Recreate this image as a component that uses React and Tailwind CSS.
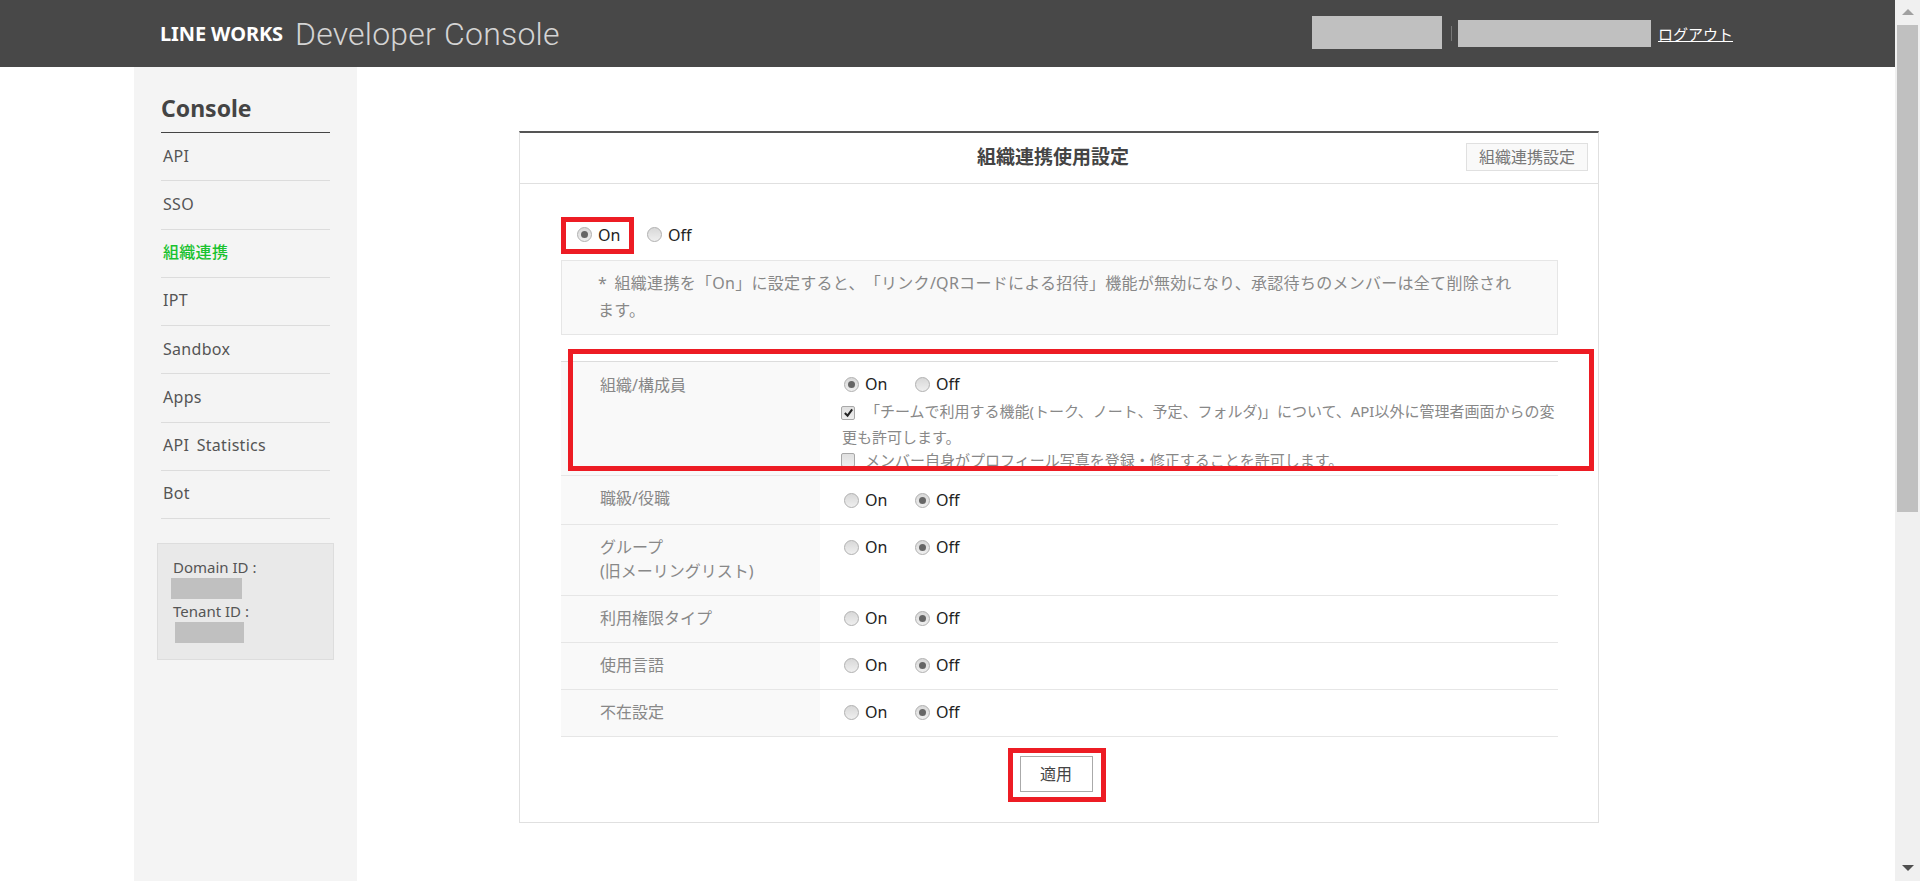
import React from "react";

const sans = "font-['Noto_Sans','Noto_Sans_CJK_JP',sans-serif] [text-spacing-trim:space-all]";

function Radio({ checked, label, className = "" }) {
  return (
    <label className={`flex items-center ${className}`}>
      <span className="flex h-[15px] w-[15px] items-center justify-center rounded-full border border-[#b0b0b0] bg-[linear-gradient(#d8d8d8,#efefef)]">
        {checked && <span className="h-[7px] w-[7px] rounded-full bg-[#666666]" />}
      </span>
      <span className="ml-[6px] text-[16px] leading-[20px] text-[#222222]">{label}</span>
    </label>
  );
}

function OnOff({ on }) {
  return (
    <div className="flex h-[20px] items-center">
      <Radio checked={on} label="On" className="w-[71px]" />
      <Radio checked={!on} label="Off" />
    </div>
  );
}

function Check({ checked }) {
  return (
    <span className="mr-[10px] -ml-px inline-flex h-[14px] w-[14px] translate-y-[1px] items-center justify-center rounded-[2px] border border-[#a8a8a8] bg-[linear-gradient(#e0e0e0,#eeeeee)]">
      {checked && (
        <svg viewBox="0 0 12 12" className="h-[11px] w-[11px]">
          <path d="M2 6.5 L5 9.5 L10 2.5" fill="none" stroke="#222222" strokeWidth="2.2" />
        </svg>
      )}
    </span>
  );
}

const navItems = ["API", "SSO", "組織連携", "IPT", "Sandbox", "Apps", "API Statistics", "Bot"];

const rows = [
  { label: "職級/役職", h: "h-[49px]", pt: "pt-[14px]" },
  { label: "グループ", sub: "(旧メーリングリスト)", h: "h-[71px]", pt: "pt-[12px]" },
  { label: "利用権限タイプ", h: "h-[47px]", pt: "pt-[12px]" },
  { label: "使用言語", h: "h-[47px]", pt: "pt-[12px]" },
  { label: "不在設定", h: "h-[47px]", pt: "pt-[12px]" },
];

export default function App() {
  return (
    <div className={`flex h-[881px] w-full overflow-hidden bg-white ${sans}`}>
      <div className="flex min-w-0 flex-1 flex-col">
        <header className="flex h-[67px] shrink-0 items-center justify-between bg-[#484848] pl-[160px] pr-[162px]">
          <div className="flex items-center">
            <span className="text-[20px] font-bold tracking-[-0.1px] text-white">LINE WORKS</span>
            <span className="ml-[12px] font-['Roboto',sans-serif] text-[32px] font-light leading-[40px] tracking-[0.2px] text-[#d4d4d4]">Developer Console</span>
          </div>
          <div className="flex items-center">
            <div className="mb-[2px] h-[33px] w-[130px] bg-[#c0c0c0]" />
            <div className="ml-[9px] h-[15px] w-px bg-[#777777]" />
            <div className="ml-[6px] h-[27px] w-[193px] bg-[#c0c0c0]" />
            <a className="ml-[7px] text-[15px] leading-[20px] text-white underline">ログアウト</a>
          </div>
        </header>

        <div className="flex min-h-0 flex-1">
          <aside className="ml-[134px] w-[223px] shrink-0 bg-[#f4f4f4] pl-[23px] pr-[23px]">
            <h2 className="ml-[4px] flex h-[65px] items-end pb-[9px] text-[23px] font-bold leading-[30px] text-[#444444]">Console</h2>
            <nav className="ml-[4px] w-[169px] border-t border-[#444444]">
              {navItems.map((item) => (
                <div
                  key={item}
                  className={`flex h-[48.25px] items-center border-b border-[#dcdcdc] pb-[2px] pl-[2px] text-[16px] tracking-[0.3px] [word-spacing:3px] ${item === "組織連携" ? "font-medium text-[#19c22f]" : "text-[#555555]"}`}
                >
                  {item}
                </div>
              ))}
            </nav>
            <div className="mt-[24px] h-[117px] w-[177px] border border-[#dddddd] bg-[#e9e9e9] pl-[15px] pt-[12px] text-[15px] leading-[22px] text-[#555555]">
              <div>Domain ID :</div>
              <div className="-ml-[2px] h-[21px] w-[71px] bg-[#c0c0c0]" />
              <div className="mt-[1px]">Tenant ID :</div>
              <div className="ml-[2px] h-[21px] w-[69px] bg-[#c0c0c0]" />
            </div>
          </aside>

          <main className="min-w-0 flex-1 pl-[162px] pt-[64px]">
            <section className="relative h-[692px] w-[1080px] border border-t-2 border-[#e0e0e0] border-t-[#555555]">
              <div className="flex h-[51px] items-center border-b border-[#e0e0e0] pb-[2px] pl-[457px] pr-[10px]">
                <h1 className="text-[19px] font-bold leading-[28px] text-[#444444]">組織連携使用設定</h1>
                <button className="ml-auto flex h-[28px] w-[122px] items-center justify-center border border-[#e0e0e0] bg-[#f9f9f9] text-[16px] text-[#777777]">
                  組織連携設定
                </button>
              </div>

              <div className="pl-[41px] pr-[40px]">
                <div className="flex h-[76px] items-center pl-[16px] pb-[6px] pt-[31px]">
                  <Radio checked label="On" className="w-[70px]" />
                  <Radio checked={false} label="Off" />
                </div>
                <div className="h-[75px] border border-[#e6e6e6] bg-[#f9f9f9] pl-[36px] pr-[40px] pt-[9px] text-[16px] leading-[27px] tracking-[0.28px] text-[#888888] [word-spacing:3px]">
                  * 組織連携を「On」に設定すると、「リンク/QRコードによる招待」機能が無効になり、承認待ちのメンバーは全て削除されます。
                </div>

                <div className="mt-[26px] border-t border-[#dcdcdc]">
                  <div className="flex h-[114px] border-b border-[#e6e6e6]">
                    <div className="w-[259px] shrink-0 bg-[#f9f9f9] pl-[39px] pt-[11px] text-[16px] leading-[24px] text-[#888888]">組織/構成員</div>
                    <div className="min-w-0 flex-1 pl-[24px] pt-[12px]">
                      <OnOff on />
                      <div className="mt-[4px] -ml-[2px] text-[15px] leading-[26px] text-[#888888]">
                        <Check checked />「チームで利用する機能(トーク、ノート、予定、フォルダ)」について、API以外に管理者画面からの変更も許可します。
                      </div>
                      <div className="-mt-[2px] -ml-[2px] text-[15px] leading-[25px] text-[#888888]">
                        <Check />メンバー自身がプロフィール写真を登録・修正することを許可します。
                      </div>
                    </div>
                  </div>
                  {rows.map((r) => (
                    <div key={r.label} className={`flex ${r.h} border-b border-[#e6e6e6]`}>
                      <div className="w-[259px] shrink-0 bg-[#f9f9f9] pl-[39px] pt-[10px] text-[16px] leading-[24px] text-[#888888]">
                        <div>{r.label}</div>
                        {r.sub && <div>{r.sub}</div>}
                      </div>
                      <div className={`min-w-0 flex-1 pl-[24px] ${r.pt}`}>
                        <OnOff on={false} />
                      </div>
                    </div>
                  ))}
                </div>

                <div className="mt-[19px] flex justify-center pr-[7px]">
                  <button className="h-[36px] w-[73px] border border-[#aaaaaa] bg-white text-[16px] text-[#444444]">適用</button>
                </div>
              </div>

              {/* annotation frames */}
              <div className="absolute left-[41px] top-[84px] h-[37px] w-[73px] border-[5px] border-[#ed1c24]" />
              <div className="absolute left-[48px] top-[216px] h-[122px] w-[1026px] border-[5px] border-[#ed1c24]" />
              <div className="absolute left-[488px] top-[615px] h-[54px] w-[98px] border-[5px] border-[#ed1c24]" />
            </section>
          </main>
        </div>
      </div>

      <div className="flex h-full w-[25px] shrink-0 flex-col items-center bg-[#f0f0f0]">
        <div className="flex h-[25px] items-center justify-center">
          <svg width="12" height="7" viewBox="0 0 12 7"><path d="M6 0 L12 6 L0 6 Z" fill="#a0a0a0" /></svg>
        </div>
        <div className="h-[487px] w-[21px] bg-[#c0c0c0]" />
        <div className="mt-auto flex h-[25px] items-center justify-center">
          <svg width="12" height="7" viewBox="0 0 12 7"><path d="M0 0 L12 0 L6 6 Z" fill="#505050" /></svg>
        </div>
      </div>
    </div>
  );
}
